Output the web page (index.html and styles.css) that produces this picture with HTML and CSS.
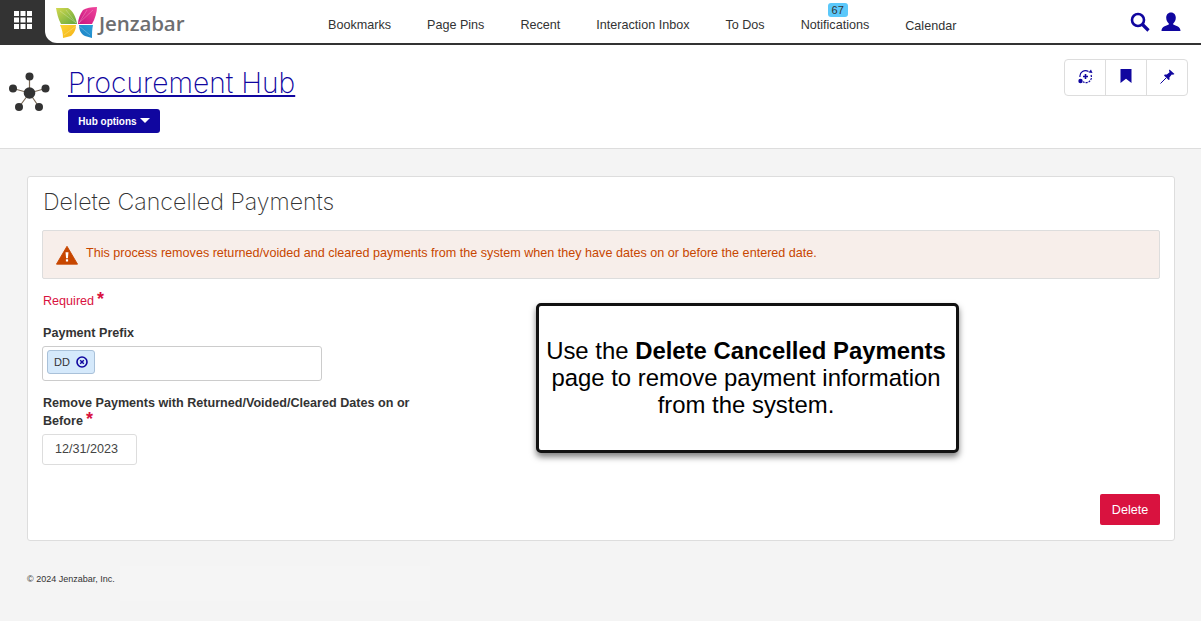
FILE: index.html
```html
<!DOCTYPE html>
<html>
<head>
    <meta charset="utf-8">
    <title>Delete Cancelled Payments</title>
    <link rel="stylesheet" href="styles.css">
</head>
<body>
<header class="topbar">
    <a class="apps-tile" href="#">
        <svg width="18" height="18" viewBox="0 0 18 18" fill="#fff">
            <rect x="0" y="0" width="5" height="5"/><rect x="6.5" y="0" width="5" height="5"/><rect x="13" y="0" width="5" height="5"/>
            <rect x="0" y="6.5" width="5" height="5"/><rect x="6.5" y="6.5" width="5" height="5"/><rect x="13" y="6.5" width="5" height="5"/>
            <rect x="0" y="13" width="5" height="5"/><rect x="6.5" y="13" width="5" height="5"/><rect x="13" y="13" width="5" height="5"/>
        </svg>
    </a>
    <div class="topbar-main">
        <a class="logo" href="#">
            <svg width="42" height="32" viewBox="0 0 42 32">
                <defs>
                    <linearGradient id="wing-green" x1="0" y1="0" x2="1" y2="1"><stop offset="0" stop-color="#d3d84f"/><stop offset="1" stop-color="#62a83c"/></linearGradient>
                    <linearGradient id="wing-pink" x1="1" y1="0" x2="0" y2="1"><stop offset="0" stop-color="#f0459c"/><stop offset="1" stop-color="#c9167f"/></linearGradient>
                    <linearGradient id="wing-yellow" x1="0" y1="0" x2="1" y2="1"><stop offset="0" stop-color="#fbd533"/><stop offset="1" stop-color="#f5b119"/></linearGradient>
                    <linearGradient id="wing-blue" x1="1" y1="0" x2="0" y2="1"><stop offset="0" stop-color="#2b9fd8"/><stop offset="1" stop-color="#1b80c4"/></linearGradient>
                </defs>
                <path d="M0 1 L12 1 C17 4 20 10 21 17 L5 17 C2 12 1 6 0 1Z" fill="url(#wing-green)"/>
                <path d="M41 0 C35 0 30 1 27 3 C24 7 22 12 22 17 L36 17 C39 12 41 5 41 0Z" fill="url(#wing-pink)"/>
                <path d="M4 18 H20 C20 24 17 27 15 29 L7 31 C7 26 6 22 4 18Z" fill="url(#wing-yellow)"/>
                <path d="M23 18 H37 C36 22 36 27 36 31 L29 29 C25 27 23 23 23 18Z" fill="url(#wing-blue)"/>
                <path d="M20 16 L4 4 M20 16 L10 3 M23 16 L37 3 M23 16 L31 3 M20 19 L8 28 M23 19 L34 28" stroke="#fff" stroke-opacity="0.3" stroke-width="0.8"/>
            </svg>
            <span class="logo-text">Jenzabar</span>
        </a>
        <nav class="main-nav">
            <a href="#">Bookmarks</a>
            <a href="#">Page Pins</a>
            <a href="#">Recent</a>
            <a href="#">Interaction Inbox</a>
            <a href="#">To Dos</a>
            <a class="has-badge" href="#">Notifications<span class="badge">67</span></a>
            <a class="nav-low" href="#">Calendar</a>
        </nav>
        <div class="top-icons">
            <svg width="20" height="20" viewBox="0 0 20 20" fill="none" stroke="#10069f">
                <circle cx="8" cy="8" r="6" stroke-width="2.6"/>
                <path d="M12.5 12.5 L18.5 18.5" stroke-width="3.2"/>
            </svg>
            <svg width="20" height="20" viewBox="0 0 20 20" fill="#10069f">
                <path d="M10 0.5 C13.2 0.5 14.8 3 14.8 5.8 C14.8 8.6 13.4 10.6 12.2 11.6 L12.2 12.6 C15 13.8 19.5 14.6 19.5 19 L0.5 19 C0.5 14.6 5 13.8 7.8 12.6 L7.8 11.6 C6.6 10.6 5.2 8.6 5.2 5.8 C5.2 3 6.8 0.5 10 0.5Z"/>
            </svg>
        </div>
    </div>
</header>

<section class="page-head">
    <svg class="hub-icon" width="42" height="42" viewBox="0 0 42 42">
        <g stroke="#7a6a58" stroke-width="1.2">
            <path d="M20.5 22 L20.5 5.5 M20.5 22 L4 17.5 M20.5 22 L36.5 17.5 M20.5 22 L10 36 M20.5 22 L30 36"/>
        </g>
        <g fill="#333">
            <circle cx="20.5" cy="22" r="5.8"/>
            <circle cx="20.5" cy="5.5" r="4"/>
            <circle cx="4" cy="17.5" r="4"/>
            <circle cx="36.5" cy="17.5" r="4"/>
            <circle cx="10" cy="36" r="4"/>
            <circle cx="30" cy="36" r="4"/>
        </g>
    </svg>
    <div class="page-title">
        <h1><a href="#">Procurement Hub</a></h1>
        <button class="hub-options">Hub options<span class="caret"></span></button>
    </div>
    <div class="page-actions">
        <a href="#">
            <svg width="15" height="15" viewBox="0 0 15 15" fill="none" stroke="#10069f">
                <path d="M2 8 A5.5 5.5 0 0 1 10.5 2.6" stroke-width="1.2"/>
                <path d="M13 6 A5.5 5.5 0 0 1 5 12.8" stroke-width="1.2" stroke-dasharray="2 1"/>
                <path d="M7.5 5 V10 M5 7.5 H10" stroke-width="1.6"/>
                <circle cx="2.5" cy="12" r="2.2" fill="#10069f" stroke="none"/>
                <path d="M10.5 3.5 L13 0.5 L14.5 4Z" fill="#10069f" stroke="none"/>
            </svg>
        </a>
        <a href="#">
            <svg width="12" height="14" viewBox="0 0 12 14" fill="#10069f"><path d="M0.5 0 H11.5 V14 L6 9.8 L0.5 14Z"/></svg>
        </a>
        <a href="#">
            <svg width="15" height="15" viewBox="0 0 15 15" fill="#10069f">
                <path d="M9.5 0.5 L14.5 5 L13 5.8 L11.8 5.4 L9.4 8.4 L9.6 10.4 L8.6 11 L4 6.4 L4.8 5.5 L6.8 5.6 L9.6 3.2 L9 1.6Z"/>
                <path d="M6 9 L0.5 14.5" stroke="#10069f" stroke-width="1"/>
            </svg>
        </a>
    </div>
</section>

<main class="content">
    <div class="card">
        <h2>Delete Cancelled Payments</h2>
        <div class="alert">
            <svg width="22" height="20" viewBox="0 0 24 21">
                <path d="M12 1 L23.5 20.5 H0.5Z" fill="#c74600" stroke="#c74600" stroke-linejoin="round"/>
                <path d="M10.4 7.5 H13.6 L13 14 H11Z M10.8 15.2 H13.2 V17.6 H10.8Z" fill="#fff"/>
            </svg>
            <span>This process removes returned/voided and cleared payments from the system when they have dates on or before the entered date.</span>
        </div>
        <p class="required">Required<span class="star">*</span></p>
        <div class="field">
            <label>Payment Prefix</label>
            <div class="tag-input">
                <span class="tag">DD
                    <svg width="12" height="12" viewBox="0 0 12 12" fill="none" stroke="#10069f">
                        <circle cx="6" cy="6" r="5" stroke-width="1.6"/>
                        <path d="M4.2 4.2 L7.8 7.8 M7.8 4.2 L4.2 7.8" stroke-width="1.4"/>
                    </svg>
                </span>
            </div>
        </div>
        <div class="field field-date">
            <label>Remove Payments with Returned/Voided/Cleared Dates on or Before<span class="star">*</span></label>
            <input class="date-input" type="text" value="12/31/2023">
        </div>
        <div class="card-actions">
            <button class="btn-delete">Delete</button>
        </div>
        <div class="callout">
            <p>Use the <b>Delete Cancelled Payments</b> page to remove payment information from the system.</p>
        </div>
    </div>
    <footer class="page-foot">
        <span>© 2024 Jenzabar, Inc.</span>
        <div class="foot-blank"></div>
    </footer>
</main>
</body>
</html>
```

FILE: styles.css
```css
* {
    box-sizing: border-box;
}
body {
    margin: 0;
    background: #f4f4f4;
    font-family: "Liberation Sans", Arial, sans-serif;
    font-size: 14px;
    color: #333;
}
a {
    color: inherit;
    text-decoration: none;
}

/* top bar */
.topbar {
    display: flex;
    height: 45px;
    background: #333;
}
.apps-tile {
    display: flex;
    justify-content: center;
    width: 45px;
    padding-top: 11px;
}
.topbar-main {
    flex: 1;
    display: flex;
    height: 43px;
    padding-left: 11px;
    background: #fff;
    border-bottom-left-radius: 12px;
}
.logo {
    display: flex;
    align-items: center;
    width: 272px;
    gap: 1px;
}
.logo svg {
    margin-top: 3px;
}
.logo-text {
    margin-top: 3px;
    font-family: "Open Sans", sans-serif;
    font-size: 20.5px;
    font-weight: 600;
    color: #6d6e70;
    letter-spacing: -0.1px;
}
.main-nav {
    display: flex;
    gap: 36px;
    padding-top: 17px;
    font-size: 12.6px;
    line-height: 16px;
    color: #333;
}
.has-badge {
    position: relative;
}
.badge {
    position: absolute;
    top: -14px;
    left: 27px;
    width: 20px;
    height: 14px;
    background: #5bc8fa;
    border-radius: 3px;
    font-size: 11px;
    line-height: 14px;
    text-align: center;
}
.nav-low {
    padding-top: 1px;
}
.top-icons {
    margin-left: auto;
    display: flex;
    gap: 11px;
    padding: 12px 20px 0 0;
}

/* page header */
.page-head {
    display: flex;
    height: 104px;
    padding: 26px 13px 0 9px;
    background: #fff;
    border-bottom: 1px solid #ddd;
}
.page-title {
    margin-left: 17px;
}
.page-title h1 {
    margin: -5px 0 0;
    font-family: Inter, sans-serif;
    font-size: 28.2px;
    font-weight: 200;
    line-height: 34px;
}
.page-title h1 a {
    color: #10069f;
    text-decoration: underline;
}
.hub-options {
    display: block;
    width: 92px;
    height: 24px;
    margin-top: 9px;
    padding: 0;
    border: 0;
    border-radius: 3px;
    background: #10069f;
    color: #fff;
    font-family: inherit;
    font-size: 10px;
    font-weight: bold;
}
.caret {
    display: inline-block;
    margin-left: 3px;
    vertical-align: 2px;
    border-top: 5px solid #fff;
    border-left: 5px solid transparent;
    border-right: 5px solid transparent;
}
.page-actions {
    margin-left: auto;
    display: flex;
    align-self: flex-start;
    height: 37px;
    margin-top: -12px;
    border: 1px solid #ddd;
    border-radius: 4px;
}
.page-actions a {
    display: flex;
    align-items: center;
    justify-content: center;
    width: 41px;
    padding-bottom: 3px;
    border-left: 1px solid #ddd;
}
.page-actions a:first-child {
    width: 40px;
    border-left: 0;
}

/* card */
.content {
    padding: 27px 26px 0 27px;
}
.card {
    position: relative;
    height: 365px;
    padding: 0 14px 0 14px;
    background: #fff;
    border: 1px solid #ddd;
    border-radius: 3px;
}
.card h2 {
    margin: 0;
    padding: 9px 0 0 1px;
    font-family: Inter, sans-serif;
    font-size: 23.2px;
    font-weight: 200;
    line-height: 32px;
    color: #333;
}
.alert {
    display: flex;
    align-items: center;
    gap: 8px;
    height: 49px;
    margin-top: 12px;
    padding: 0 0 0 13px;
    background: #f7eeea;
    border: 1px solid #ddd;
    border-radius: 2px;
    font-size: 12.6px;
    color: #c74600;
}
.alert span {
    margin-top: -3px;
}
.required {
    margin: 13px 0 0;
    padding-left: 1px;
    font-size: 12.6px;
    line-height: 18px;
    color: #d9123f;
}
.star {
    margin-left: 3px;
    font-size: 18px;
    font-weight: bold;
    line-height: 12px;
    color: #d9123f;
}
.field {
    width: 380px;
    margin-top: 14px;
}
.field label {
    display: block;
    padding-left: 1px;
    font-size: 12.6px;
    font-weight: bold;
    line-height: 18px;
    color: #333;
}
.tag-input {
    width: 280px;
    height: 35px;
    margin-top: 4px;
    padding: 3px 4px;
    background: #fff;
    border: 1px solid #ccc;
    border-radius: 3px;
}
.tag {
    display: inline-flex;
    align-items: center;
    gap: 6px;
    height: 24px;
    padding: 0 6px;
    background: #d5e9fb;
    border: 1px solid #a9c1d9;
    border-radius: 3px;
    font-size: 11px;
}
.field-date {
    margin-top: 13px;
}
.date-input {
    display: block;
    width: 95px;
    height: 31px;
    margin-top: 4px;
    padding: 0 0 2px 12px;
    border: 1px solid #ddd;
    border-radius: 3px;
    font-family: inherit;
    font-size: 12.6px;
    color: #444;
}
.card-actions {
    display: flex;
    justify-content: flex-end;
    margin-top: 29px;
}
.btn-delete {
    width: 60px;
    height: 31px;
    padding: 0;
    border: 0;
    border-radius: 2px;
    background: #d9123f;
    color: #fff;
    font-family: inherit;
    font-size: 12.6px;
}

/* annotation box over the page */
.callout {
    position: absolute;
    left: 508px;
    top: 126px;
    display: flex;
    align-items: center;
    justify-content: center;
    width: 423px;
    height: 150px;
    padding: 0 7px 2px 4px;
    background: #fff;
    border: 3px solid #111;
    border-radius: 5px;
    box-shadow: 0 4px 6px rgba(0, 0, 0, 0.5);
    text-align: center;
    color: #000;
}
.callout p {
    margin: 0;
    font-size: 23.9px;
    line-height: 27px;
}

/* footer */
.page-foot {
    display: flex;
    margin-top: 25px;
    font-size: 9px;
    line-height: 26px;
}
.page-foot span {
    width: 93px;
}
.foot-blank {
    width: 310px;
    height: 35px;
    background: #f5f5f5;
}
```
